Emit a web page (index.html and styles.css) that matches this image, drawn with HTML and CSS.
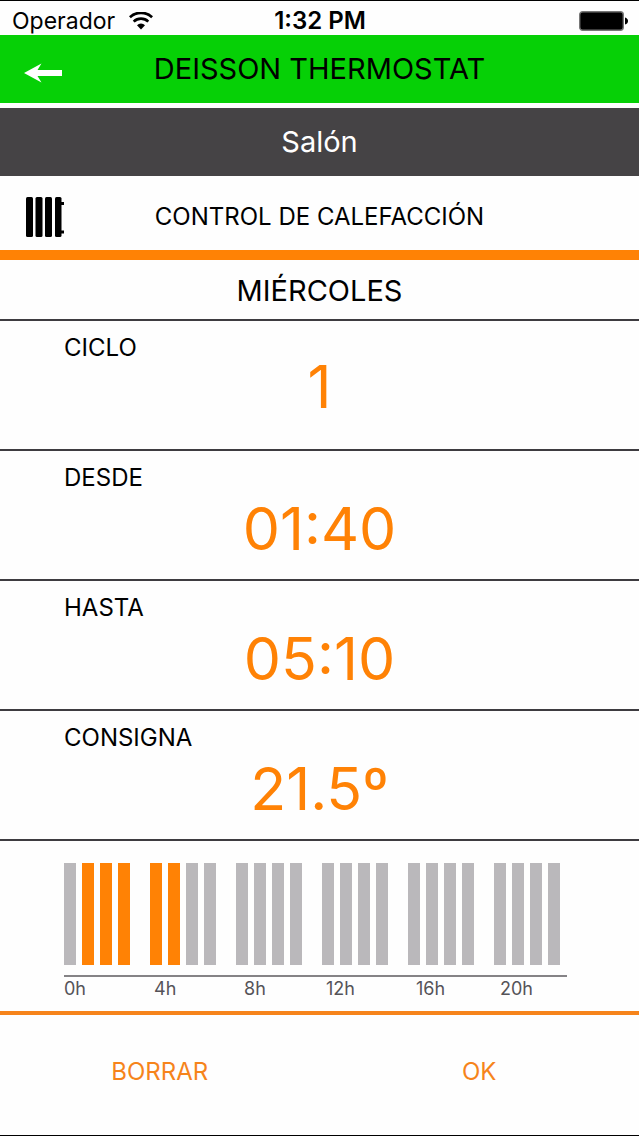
FILE: index.html
```html
<!DOCTYPE html>
<html lang="es">
<head>
<meta charset="utf-8">
<meta name="viewport" content="width=device-width, initial-scale=1">
<title>Deisson Thermostat</title>
<link rel="stylesheet" href="styles.css">
</head>
<body class="app">
  <div class="status">
    <span class="status-carrier">Operador
      <svg class="wifi" viewBox="0 0 24 18" aria-hidden="true">
        <path d="M0.900 5.300a16 16 0 0 1 22.200 0M4.700 9.600a10.500 10.500 0 0 1 14.600 0" fill="none" stroke="#000" stroke-width="2.700"/>
        <path d="M12 17.600l-4-4.300a5.600 5.600 0 0 1 8 0z"/>
      </svg>
    </span>
    <span class="status-time">1:32 PM</span>
    <span class="status-battery">
      <svg class="battery" viewBox="0 0 49 20" aria-hidden="true">
        <rect x="0.700" y="0.700" width="43.600" height="18.600" rx="3" stroke="#777" stroke-width="1.400"/>
        <path d="M46 6.500q3 1 3 3.500t-3 3.500z"/>
      </svg>
    </span>
  </div>
  <header class="topbar">
    <button class="back" type="button" aria-label="Volver">
      <svg class="back-icon" viewBox="0 0 38 20" aria-hidden="true">
        <path d="M0 10L17.500 0.500L13.500 7H38V13H13.500L17.500 19.500Z" fill="#fff"/>
      </svg>
    </button>
    <h1 class="topbar-title">DEISSON THERMOSTAT</h1>
  </header>
  <h2 class="room">Salón</h2>
  <div class="mode">
    <svg class="radiator" viewBox="0 0 38 40" aria-hidden="true">
      <rect width="7" height="40" rx="1.500"/>
      <rect x="9.500" width="7" height="40" rx="1.500"/>
      <rect x="19" width="7" height="40" rx="1.500"/>
      <rect x="29" width="6.500" height="40" rx="1.500"/>
      <path d="M35 5h3v3h-3zM35 33.500h3v3h-3z"/>
    </svg>
    <h3 class="mode-title">CONTROL DE CALEFACCIÓN</h3>
  </div>
  <main class="schedule">
    <h4 class="day">MIÉRCOLES</h4>
    <dl class="fields">
      <div class="field field-compact"><dt class="field-label">CICLO</dt><dd class="field-value">1</dd></div>
      <div class="field"><dt class="field-label">DESDE</dt><dd class="field-value">01:40</dd></div>
      <div class="field"><dt class="field-label">HASTA</dt><dd class="field-value">05:10</dd></div>
      <div class="field"><dt class="field-label">CONSIGNA</dt><dd class="field-value">21.5º</dd></div>
    </dl>
    <section class="chart" aria-label="Horas activas">
      <div class="bars">
        <div class="group"><i class="bar"></i><i class="bar on"></i><i class="bar on"></i><i class="bar on"></i></div>
        <div class="group"><i class="bar on"></i><i class="bar on"></i><i class="bar"></i><i class="bar"></i></div>
        <div class="group"><i class="bar"></i><i class="bar"></i><i class="bar"></i><i class="bar"></i></div>
        <div class="group"><i class="bar"></i><i class="bar"></i><i class="bar"></i><i class="bar"></i></div>
        <div class="group"><i class="bar"></i><i class="bar"></i><i class="bar"></i><i class="bar"></i></div>
        <div class="group"><i class="bar"></i><i class="bar"></i><i class="bar"></i><i class="bar"></i></div>
      </div>
      <div class="axis"><span>0h</span><span>4h</span><span>8h</span><span>12h</span><span>16h</span><span>20h</span></div>
    </section>
  </main>
  <footer class="actions">
    <button class="action" type="button">BORRAR</button>
    <button class="action" type="button">OK</button>
  </footer>
</body>
</html>
```
FILE: styles.css
```css
* {
  box-sizing: border-box;
}

h1, h2, h3, h4, dl, dd {
  margin: 0;
  font-weight: 400;
}

.app {
  display: flex;
  flex-direction: column;
  min-height: 100vh;
  margin: 0;
  border-top: 1px solid #000;
  border-bottom: 1px solid #000;
  background: #fefefe;
  color: #000;
  font-family: Inter, "Liberation Sans", sans-serif;
}

.status {
  display: grid;
  grid-template-columns: 1fr auto 1fr;
  align-items: center;
  height: 34px;
  padding: 6px 11px 0 12px;
  font-size: 23px;
  line-height: 28px;
}

.status-carrier {
  display: flex;
  align-items: center;
  gap: 14px;
}

.wifi {
  width: 24px;
  height: 18px;
}

.status-time {
  font-size: 24px;
  font-weight: 600;
}

.status-battery {
  display: flex;
  justify-content: flex-end;
}

.battery {
  width: 49px;
  height: 20px;
}

.topbar {
  display: grid;
  grid-template-columns: 64px 1fr 64px;
  align-items: center;
  height: 68px;
  background: #06d006;
}

.back {
  display: flex;
  justify-content: flex-end;
  padding: 8px 2px 0 0;
  border: 0;
  background: none;
}

.back-icon {
  width: 38px;
  height: 20px;
}

.topbar-title,
.room,
.day {
  font-size: 29px;
  line-height: 36px;
  text-align: center;
}

.room {
  margin-top: 5px;
  padding: 16px;
  background: #454345;
  color: #fff;
}

.mode {
  display: grid;
  grid-template-columns: 64px 1fr 64px;
  align-items: center;
  height: 84px;
  padding-top: 8px;
  border-bottom: 10px solid #ff8205;
}

.radiator {
  width: 38px;
  height: 40px;
  margin-left: 26px;
}

.mode-title {
  font-size: 24px;
  line-height: 32px;
  text-align: center;
}

.day {
  padding: 13px 0 10px;
}

.field {
  padding: 12px 0 14px;
  border-top: 2px solid #3e3c40;
}

.field-label {
  padding-left: 64px;
  font-size: 24px;
  line-height: 30px;
}

.field-value {
  color: #ff8205;
  font-size: 59px;
  line-height: 72px;
  text-align: center;
}

.field-compact .field-value {
  padding-bottom: 24px;
  line-height: 48px;
}

.chart {
  padding: 22px 72px 10px 64px;
  border-top: 2px solid #3e3c40;
}

.bars {
  display: flex;
  gap: 20px;
  height: 102px;
  margin: 0 7px 10px 0;
}

.group {
  display: flex;
  flex: 1;
  gap: 6px;
}

.bar {
  flex: 1;
  background: #bab8bb;
}

.on {
  background: #ff8205;
}

.axis {
  display: grid;
  grid-template-columns: 90fr 90fr 82fr 90fr 84fr 67fr;
  border-top: 2px solid #858386;
  color: #555358;
  font-size: 18px;
  line-height: 24px;
}

.actions {
  display: grid;
  grid-template-columns: 1fr 1fr;
  flex: 1;
  min-height: 80px;
  border-top: 4px solid #f6841b;
}

.action {
  padding: 0 0 8px;
  border: 0;
  background: none;
  color: #f6841b;
  font: inherit;
  font-size: 24px;
}
```
